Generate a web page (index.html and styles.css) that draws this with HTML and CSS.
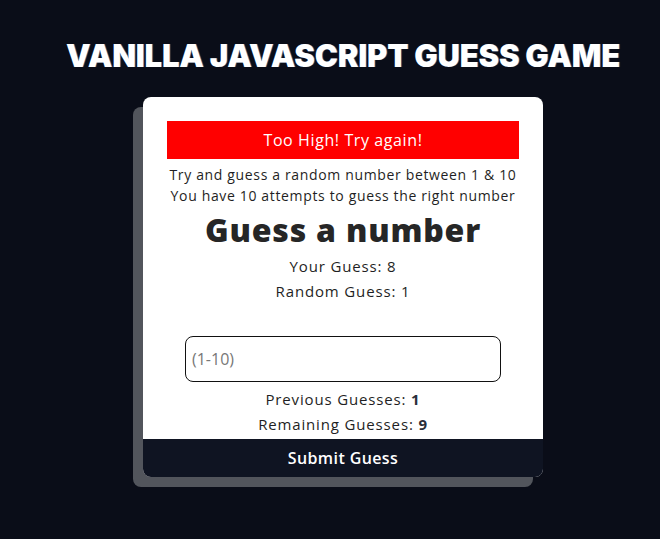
FILE: index.html
```html
<!DOCTYPE html>
<html lang="en">
<head>
<meta charset="utf-8">
<title>Vanilla JavaScript Guess Game</title>
<link rel="stylesheet" href="styles.css">
</head>
<body>
<main class="page">
  <h1 class="title">VANILLA JAVASCRIPT GUESS GAME</h1>
  <section class="card">
    <div class="alert">Too High! Try again!</div>
    <p class="intro">Try and guess a random number between 1 &amp; 10<br>You have 10 attempts to guess the right number</p>
    <h2 class="heading">Guess a number</h2>
    <p class="stat">Your Guess: 8</p>
    <p class="stat">Random Guess: 1</p>
    <input class="guess-input" type="text" placeholder="(1-10)">
    <p class="stat">Previous Guesses: <strong>1</strong></p>
    <p class="stat">Remaining Guesses: <strong>9</strong></p>
    <button class="submit" type="button">Submit Guess</button>
  </section>
</main>
</body>
</html>
```

FILE: styles.css
```css
* { box-sizing: border-box; }
html, body { margin: 0; padding: 0; }
body {
  background: #0a0d18;
  font-family: "Open Sans", "DejaVu Sans", sans-serif;
  color: #1f1f24;
  height: 539px;
  overflow: hidden;
}
.page {
  display: flex;
  flex-direction: column;
  align-items: center;
  padding-left: 26px;
  padding-top: 36px;
}
.title {
  margin: 0;
  color: #fff;
  font-family: "Inter", "Open Sans", sans-serif;
  font-weight: 900;
  font-size: 31px;
  line-height: 40px;
  letter-spacing: -0.2px;
  text-shadow: 1px 0 0 rgba(80,160,255,0.4);
}
.card {
  margin-top: 21px;
  width: 400px;
  background: #fff;
  border-radius: 8px;
  box-shadow: -10px 10px 0 #52555c;
  padding: 24px 24px 0;
  display: flex;
  flex-direction: column;
  align-items: center;
  text-align: center;
}
.alert {
  width: 352px;
  height: 38px;
  background: #ff0000;
  color: #fff;
  font-size: 16px;
  line-height: 38px;
  letter-spacing: 0.6px;
}
.intro {
  margin: 5px 0 0;
  font-size: 14px;
  line-height: 21px;
  letter-spacing: 0.65px;
}
.heading {
  margin: 6px 0 6px;
  font-size: 32px;
  line-height: 36px;
  font-weight: 800;
  letter-spacing: 0.8px;
  color: #262626;
}
.stat {
  margin: 0;
  font-size: 15px;
  line-height: 25px;
  letter-spacing: 0.85px;
}
.stat strong { font-weight: 700; color: #2a2e3a; }
.guess-input {
  margin: 32px 0 5px;
  width: 316px;
  height: 46px;
  border: 1px solid #111;
  border-radius: 8px;
  padding: 0 6px;
  font-family: inherit;
  font-size: 16px;
  color: #222;
  outline: none;
}
.guess-input::placeholder { color: #777; }
.submit {
  margin: 2px -24px 0;
  width: 400px;
  height: 38px;
  border: none;
  border-radius: 0 0 8px 8px;
  background: #0f1422;
  color: #fff;
  font-family: inherit;
  font-size: 16px;
  font-weight: 600;
  letter-spacing: 0.4px;
}
```
